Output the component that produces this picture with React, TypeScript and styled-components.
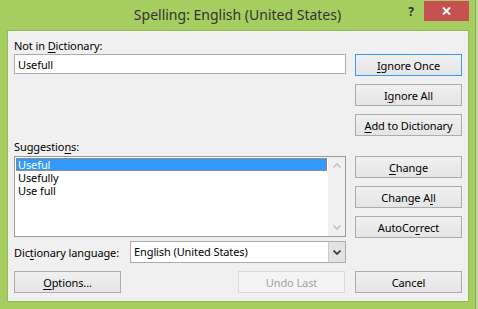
import styled, { createGlobalStyle } from 'styled-components';

const UI_FONT = `'Noto Sans', 'Liberation Sans', sans-serif`;

const GlobalStyle = createGlobalStyle`
  html, body {
    margin: 0;
    padding: 0;
  }

  body {
    background: #c3da9b;
    font-family: ${UI_FONT};
  }
`;

const Window = styled.div`
  box-sizing: border-box;
  width: 476px;
  height: 309px;
  padding: 0 6px 7px 7px;
  background: #a6cd5f;
  border-right: 1px solid #8aa955;
  display: flex;
  flex-direction: column;
`;

const TitleBar = styled.div`
  height: 30px;
  margin: 0 -6px 0 -7px;
  display: grid;
  grid-template-columns: 1fr auto 1fr;
  align-items: start;
`;

const Title = styled.div`
  grid-column: 2;
  font-size: 14px;
  line-height: 30px;
  color: #333;
`;

const WindowControls = styled.div`
  grid-column: 3;
  justify-self: end;
  display: flex;
  align-items: flex-start;
  margin: 1px 6px 0 0;
`;

const HelpButton = styled.div`
  width: 26px;
  height: 20px;
  font-size: 12px;
  font-weight: bold;
  line-height: 22px;
  text-align: center;
  color: #333;
`;

const CloseButton = styled.div`
  width: 45px;
  height: 20px;
  background: #c75050;
  display: flex;
  align-items: center;
  justify-content: center;
`;

const Client = styled.div`
  flex: 1;
  border: 1px solid #93b858;
  background: #f0f0f0;
  padding: 6px 7px 8px 6px;
`;

const Body = styled.div`
  display: grid;
  grid-template-columns: 332px 107px;
  grid-template-rows: 17px 82px 20px 82px 25px 30px;
  column-gap: 9px;
  font-size: 11px;
  letter-spacing: -0.1px;
  color: #000;
`;

const Label = styled.div<{ $row: number }>`
  grid-column: 1;
  grid-row: ${({ $row }) => $row};
  align-self: center;
  line-height: 15px;
  white-space: nowrap;
`;

const Key = styled.span`
  text-decoration: underline;
  text-underline-offset: 2px;
`;

const TextField = styled.input`
  grid-column: 1;
  grid-row: 2;
  align-self: start;
  box-sizing: border-box;
  width: 332px;
  height: 20px;
  margin: 0;
  padding: 0 3px;
  border: 1px solid #acacac;
  background: #fff;
  font: 11px ${UI_FONT};
  letter-spacing: -0.1px;
  color: #000;
  outline: none;
`;

const ButtonStack = styled.div<{ $row: number }>`
  grid-column: 2;
  grid-row: ${({ $row }) => $row};
  display: flex;
  flex-direction: column;
  gap: 8px;
`;

const Button = styled.div<{ $variant?: 'default' | 'disabled' }>`
  box-sizing: border-box;
  width: 107px;
  height: 22px;
  border: 1px solid
    ${({ $variant }) => ($variant === 'default' ? '#3399ff' : $variant === 'disabled' ? '#d9d9d9' : '#acacac')};
  background: ${({ $variant }) =>
    $variant === 'disabled' ? '#f4f4f4' : 'linear-gradient(#f0f0f0, #e5e5e5)'};
  color: ${({ $variant }) => ($variant === 'disabled' ? '#a2a2a2' : '#000')};
  display: flex;
  align-items: center;
  justify-content: center;
  white-space: nowrap;
  line-height: 15px;
`;

const ListBox = styled.div`
  grid-column: 1;
  grid-row: 4;
  align-self: start;
  box-sizing: border-box;
  height: 81px;
  border: 1px solid #999;
  background: #fff;
  display: flex;
`;

const Items = styled.div`
  flex: 1;
  padding: 1px;
`;

const Item = styled.div<{ $selected?: boolean }>`
  box-sizing: border-box;
  height: 13px;
  padding-left: 2px;
  line-height: 13px;
  color: ${({ $selected }) => ($selected ? '#fff' : '#000')};
  background: ${({ $selected }) => ($selected ? '#3399ff' : 'transparent')};
  outline: ${({ $selected }) => ($selected ? '1px dotted #e07a1a' : 'none')};
  outline-offset: -1px;
`;

const ScrollBar = styled.div`
  width: 17px;
  background: #f0f0f0;
  display: flex;
  flex-direction: column;
  justify-content: space-between;
`;

const ScrollArrow = styled.div`
  height: 17px;
  display: flex;
  align-items: center;
  justify-content: center;
`;

const LanguageRow = styled.div`
  grid-column: 1;
  grid-row: 5;
  align-self: end;
  display: flex;
  align-items: center;
  justify-content: space-between;
  white-space: nowrap;
`;

const Select = styled.div`
  box-sizing: border-box;
  width: 216px;
  height: 22px;
  border: 1px solid #acacac;
  background: #fff;
  display: flex;
`;

const SelectValue = styled.div`
  flex: 1;
  padding-left: 3px;
  line-height: 20px;
`;

const SelectArrow = styled.div`
  width: 16px;
  background: #e3e3e3;
  border-left: 1px solid #c9c9c9;
  display: flex;
  align-items: center;
  justify-content: center;
`;

const FooterLeft = styled.div`
  grid-column: 1;
  grid-row: 6;
  align-self: end;
  display: flex;
  justify-content: space-between;
  padding-right: 1px;
`;

const FooterRight = styled.div`
  grid-column: 2;
  grid-row: 6;
  align-self: end;
`;

function Chevron({ up, color, weight }: { up?: boolean; color: string; weight: number }) {
  return (
    <svg width="8" height="5" viewBox="0 0 8 5">
      <path
        d={up ? 'M0.5 4.5 L4 1 L7.5 4.5' : 'M0.5 0.5 L4 4 L7.5 0.5'}
        fill="none"
        stroke={color}
        strokeWidth={weight}
      />
    </svg>
  );
}

const suggestions = ['Useful', 'Usefully', 'Use full'];

function App() {
  return (
    <>
      <GlobalStyle />
      <Window>
        <TitleBar>
          <Title>Spelling: English (United States)</Title>
          <WindowControls>
            <HelpButton>?</HelpButton>
            <CloseButton>
              <svg width="9" height="8" viewBox="0 0 9 8">
                <path d="M1 0.5 L8 7.5 M8 0.5 L1 7.5" stroke="#fff" strokeWidth="2" />
              </svg>
            </CloseButton>
          </WindowControls>
        </TitleBar>

        <Client>
          <Body>
            <Label $row={1}>
              Not in <Key>D</Key>ictionary:
            </Label>
            <TextField defaultValue="Usefull" readOnly />

            <ButtonStack $row={2}>
              <Button $variant="default">
                <Key>I</Key>gnore Once
              </Button>
              <Button>
                I<Key>g</Key>nore All
              </Button>
              <Button>
                <Key>A</Key>dd to Dictionary
              </Button>
            </ButtonStack>

            <Label $row={3}>
              Suggestio<Key>n</Key>s:
            </Label>
            <ListBox>
              <Items>
                {suggestions.map((word, index) => (
                  <Item key={word} $selected={index === 0}>
                    {word}
                  </Item>
                ))}
              </Items>
              <ScrollBar>
                <ScrollArrow>
                  <Chevron up color="#c2c2c2" weight={1.6} />
                </ScrollArrow>
                <ScrollArrow>
                  <Chevron color="#c2c2c2" weight={1.6} />
                </ScrollArrow>
              </ScrollBar>
            </ListBox>

            <ButtonStack $row={4}>
              <Button>
                <Key>C</Key>hange
              </Button>
              <Button>
                Change A<Key>l</Key>l
              </Button>
              <Button>
                AutoCo<Key>r</Key>rect
              </Button>
            </ButtonStack>

            <LanguageRow>
              <span>
                Dic<Key>t</Key>ionary language:
              </span>
              <Select>
                <SelectValue>English (United States)</SelectValue>
                <SelectArrow>
                  <Chevron color="#444" weight={1.8} />
                </SelectArrow>
              </Select>
            </LanguageRow>

            <FooterLeft>
              <Button>
                <Key>O</Key>ptions...
              </Button>
              <Button $variant="disabled">Undo Last</Button>
            </FooterLeft>
            <FooterRight>
              <Button>Cancel</Button>
            </FooterRight>
          </Body>
        </Client>
      </Window>
    </>
  );
}

export default App;
